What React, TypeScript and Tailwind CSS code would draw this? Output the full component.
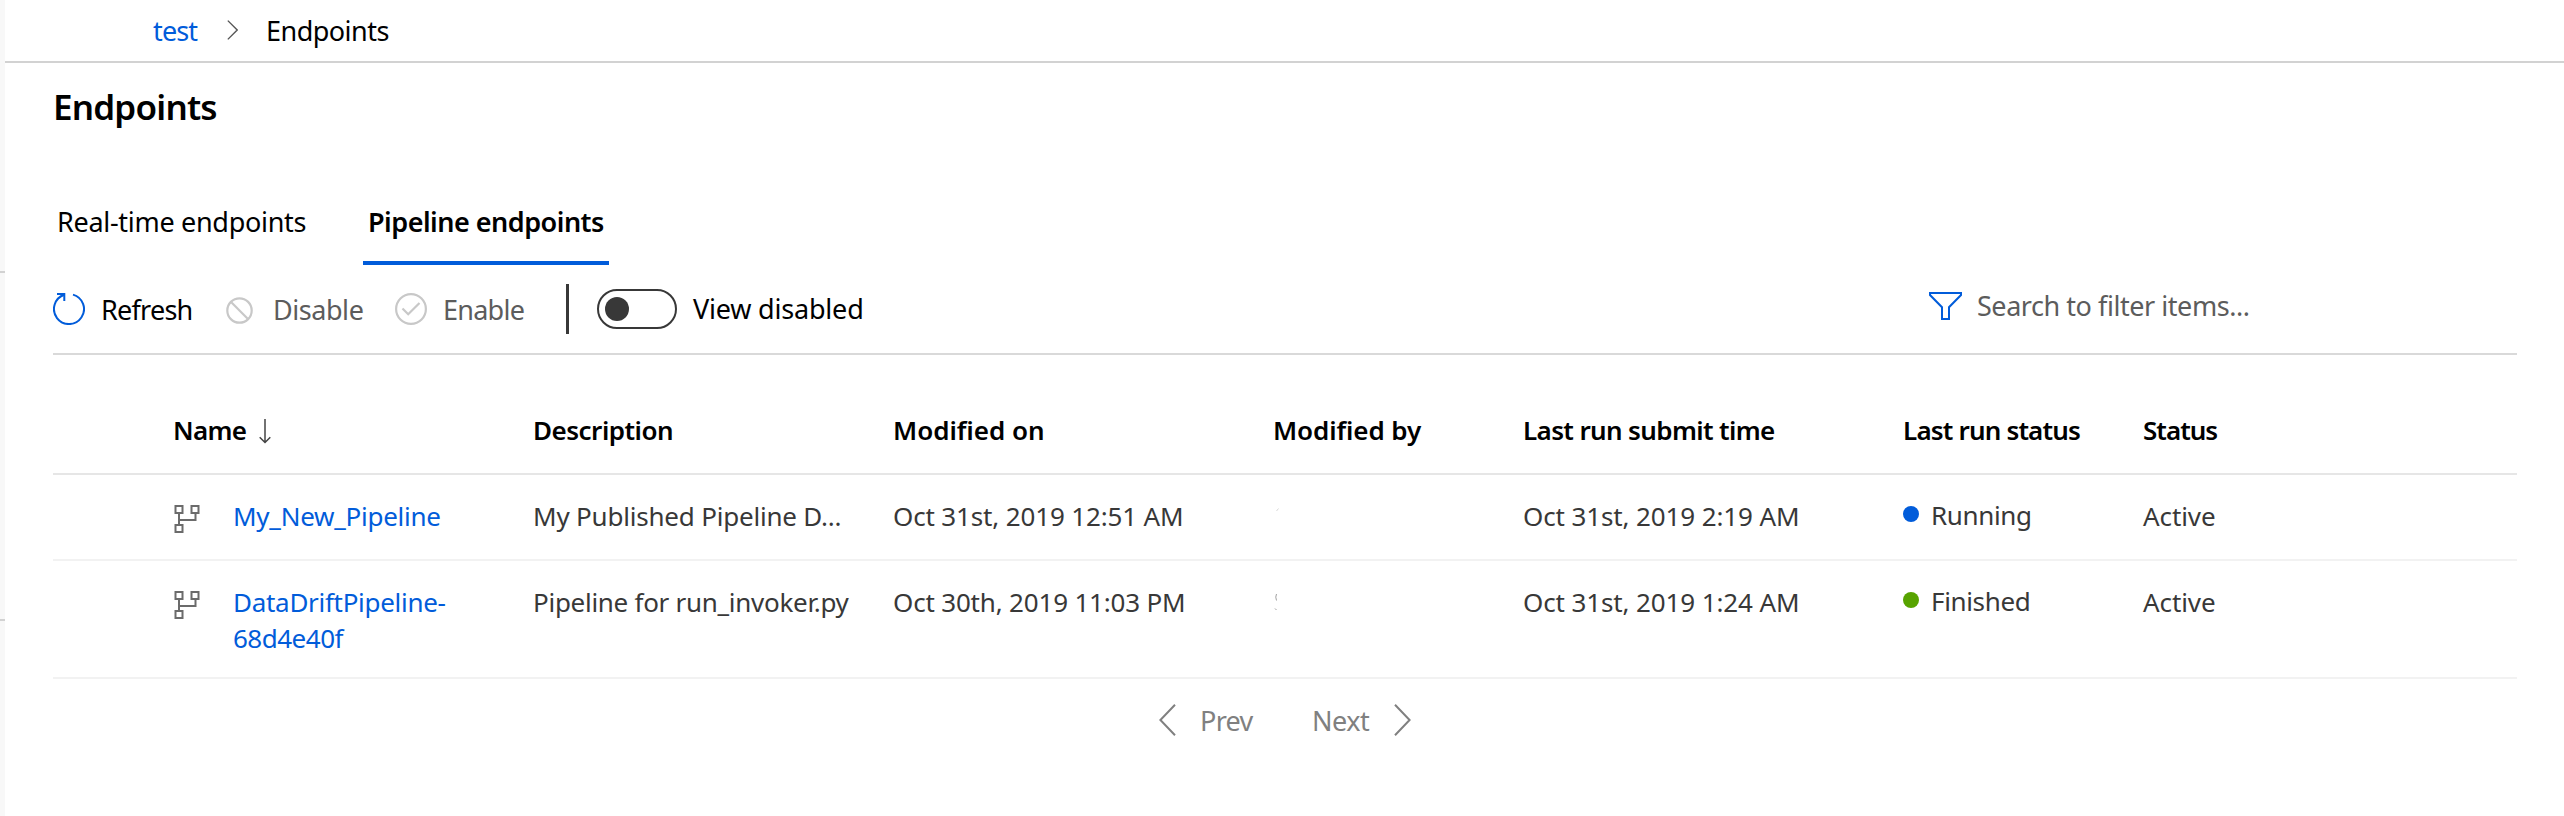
import type { ReactNode } from "react";

const COLS = "grid grid-cols-[120px_360px_360px_380px_250px_380px_240px_1fr]";

type Row = {
  name: ReactNode;
  description: ReactNode;
  modifiedOn: ReactNode;
  modifiedBy: ReactNode;
  lastRun: string;
  status: ReactNode;
  dot: string;
  height: string;
};

const rows: Row[] = [
  {
    name: <span className="tracking-[-0.25px]">My_New_Pipeline</span>,
    description: <span className="tracking-[-0.2px]">My Published Pipeline D...</span>,
    modifiedOn: <span className="tracking-[-0.15px]">Oct 31st, 2019 12:51 AM</span>,
    modifiedBy: <RedactedName d="M2.5 4L4.5 1.5" className="text-[#d8d8d8]" />,
    lastRun: "Oct 31st, 2019 2:19 AM",
    status: "Running",
    dot: "bg-[#015cda]",
    height: "h-[86px]",
  },
  {
    name: (
      <>
        <span className="block tracking-[-0.29px]">DataDriftPipeline-</span>
        <span className="block tracking-[-0.5px]">68d4e40f</span>
      </>
    ),
    description: <span className="tracking-[-0.28px]">Pipeline for run_invoker.py</span>,
    modifiedOn: <span className="tracking-[-0.18px]">Oct 30th, 2019 11:03 PM</span>,
    modifiedBy: <RedactedName d="M2.5 1Q1 4 2.5 7.5M1 15.5L2.5 17" className="text-[#a0a0a0]" />,
    lastRun: "Oct 31st, 2019 1:24 AM",
    status: "Finished",
    dot: "bg-[#57a300]",
    height: "h-[118px]",
  },
];

function RedactedName({ d, className }: { d: string; className: string }) {
  return (
    <svg className={`mt-[9px] ml-px h-[18px] w-[5px] ${className}`} viewBox="0 0 5 18" fill="none" stroke="currentColor">
      <path d={d} />
    </svg>
  );
}

function RefreshIcon() {
  return (
    <svg className="size-8 shrink-0 text-[#015cda]" viewBox="0 0 32 32" fill="none" stroke="currentColor" strokeWidth="2">
      <path d="M20 1.6A15 15 0 1 1 11.3 1.8" />
      <path d="M4 1h7.3v7" />
    </svg>
  );
}

function DisableIcon() {
  return (
    <svg className="mt-0.5 size-[27px] shrink-0 text-[#c8c8c8]" viewBox="0 0 27 27" fill="none" stroke="currentColor" strokeWidth="2.2">
      <circle cx="13.5" cy="13.5" r="12.2" />
      <path d="M4.8 4.8l17.4 17.4" />
    </svg>
  );
}

function EnableIcon() {
  return (
    <svg className="size-8 shrink-0 text-[#c8c8c8]" viewBox="0 0 32 32" fill="none" stroke="currentColor" strokeWidth="2.2">
      <circle cx="16" cy="16" r="14.9" />
      <path d="M7.5 15.5l5.7 5.7L24.5 10" />
    </svg>
  );
}

function FilterIcon() {
  return (
    <svg className="h-7 w-[33px] shrink-0 text-[#015cda]" viewBox="0 0 33 28" fill="none" stroke="currentColor" strokeWidth="2">
      <path d="M1 1h31v2L20 15.2V27h-7V15.2L1 3z" />
    </svg>
  );
}

function PipelineIcon() {
  return (
    <svg className="mt-[7px] ml-px h-7 w-[27px] shrink-0 text-[#6b6b6b]" viewBox="0 0 27 28" fill="none" stroke="currentColor" strokeWidth="2">
      <path d="M1.5 1h7v7h-7zM17.5 1h7v7h-7zM1.5 20h7v7h-7z" />
      <path d="M5 8v12M5 15h16.5V8" />
    </svg>
  );
}

function Chevron({ d, className }: { d: string; className: string }) {
  return (
    <svg className={className} viewBox="0 0 17 32" fill="none" stroke="currentColor">
      <path d={d} />
    </svg>
  );
}

export default function App() {
  return (
    <div className="flex h-[816px] w-[2564px] overflow-hidden bg-white font-['Noto_Sans',sans-serif] text-[26px] leading-9 text-black">
      <aside className="flex w-[5px] shrink-0 flex-col bg-[#f8f8f8] pt-[271px]">
        <div className="h-0.5 bg-[#d2d2d2]" />
        <div className="mt-[346px] h-0.5 bg-[#d2d2d2]" />
      </aside>

      <div className="flex min-w-0 flex-1 flex-col">
        <nav className="flex h-[63px] shrink-0 items-start border-b-2 border-[#d2d2d2] pt-[13px] pl-[148px] text-[27px]">
          <a className="w-[74px] tracking-[-0.85px] text-[#015cda]">test</a>
          <Chevron className="mt-[7px] h-5 w-[11px] stroke-[2.2] text-[#555]" d="M1 1L16 16L1 31" />
          <span className="ml-[28px] tracking-[-0.53px]">Endpoints</span>
        </nav>

        <main className="mr-[47px] ml-12 flex flex-col">
          <h1 className="mt-5 text-[35px] leading-[48px] font-semibold tracking-[-0.8px]">Endpoints</h1>

          <div className="mt-[72px] flex h-[62px] items-stretch text-[27px]">
            <button className="ml-1 flex w-[306px] items-start pt-px text-left tracking-[-0.3px]">Real-time endpoints</button>
            <button className="flex w-[246px] items-start border-b-4 border-[#015cda] pt-px pl-[5px] text-left font-semibold tracking-[-0.5px] whitespace-nowrap">
              Pipeline endpoints
            </button>
          </div>

          <div className="flex h-[90px] items-center border-b-2 border-[#d9d9d9] text-[27px]">
            <button className="flex w-[173px] items-center gap-4">
              <RefreshIcon />
              <span className="pt-0.5 tracking-[-0.75px]">Refresh</span>
            </button>
            <button className="flex w-[169px] items-center gap-[20px] text-[#5c5c5c]">
              <DisableIcon />
              <span className="pt-0.5 tracking-[-0.45px]">Disable</span>
            </button>
            <button className="flex w-[171px] items-center gap-4 text-[#5c5c5c]">
              <EnableIcon />
              <span className="pt-0.5 tracking-[-0.75px]">Enable</span>
            </button>
            <div className="h-[50px] w-[3px] bg-[#383838]" />
            <button className="ml-[28px] flex h-10 w-20 items-center rounded-full border-2 border-[#383838] pl-1.5">
              <span className="size-6 rounded-full bg-[#383838]" />
            </button>
            <span className="ml-4 tracking-[-0.2px]">View disabled</span>
            <div className="mr-[266px] mb-[7px] ml-auto flex w-[322px] items-center gap-[15px]">
              <FilterIcon />
              <span className="tracking-[-0.45px] whitespace-nowrap text-[#5c5c5c]">Search to filter items...</span>
            </div>
          </div>

          <div className={`${COLS} h-[120px] border-b-2 border-[#e6e6e6] pt-[57px] font-semibold`}>
            <span />
            <span className="flex tracking-[-0.7px]">
              Name
              <svg className="mt-[7px] ml-[13px] h-[25px] w-3 text-[#444]" viewBox="0 0 12 25" fill="none" stroke="currentColor" strokeWidth="1.5">
                <path d="M6 0v23.5M.7 18.2L6 23.5l5.3-5.3" />
              </svg>
            </span>
            <span className="tracking-[-0.5px]">Description</span>
            <span>Modified on</span>
            <span className="tracking-[-0.08px]">Modified by</span>
            <span className="tracking-[-0.63px]">Last run submit time</span>
            <span className="tracking-[-0.82px]">Last run status</span>
            <span className="tracking-[-0.98px]">Status</span>
          </div>

          {rows.map((row) => (
            <div key={row.lastRun} className={`${COLS} ${row.height} border-b-2 border-[#f2f2f2] pt-[23px] text-[#383838]`}>
              <span />
              <div className="flex items-start gap-8">
                <PipelineIcon />
                <a className="text-[#015cda]">{row.name}</a>
              </div>
              <span>{row.description}</span>
              <span>{row.modifiedOn}</span>
              <span>{row.modifiedBy}</span>
              <span className="tracking-[-0.12px]">{row.lastRun}</span>
              <div className="-mt-px flex items-start">
                <span className={`mt-[9px] size-4 rounded-full ${row.dot}`} />
                <span className="ml-3 tracking-[-0.35px]">{row.status}</span>
              </div>
              <span className="tracking-[-0.1px]">Active</span>
            </div>
          ))}

          <div className="mt-[22px] flex items-center pl-[1106px] text-[27px] text-[#808080]">
            <Chevron className="h-8 w-[17px] stroke-2" d="M16 .7L1.4 16L16 31.3" />
            <span className="ml-6 w-[112px] pt-0.5 tracking-[-0.7px]">Prev</span>
            <span className="w-[82px] pt-0.5 tracking-[-0.5px]">Next</span>
            <Chevron className="h-8 w-[17px] stroke-2" d="M1 .7L15.6 16L1 31.3" />
          </div>
        </main>
      </div>
    </div>
  );
}
